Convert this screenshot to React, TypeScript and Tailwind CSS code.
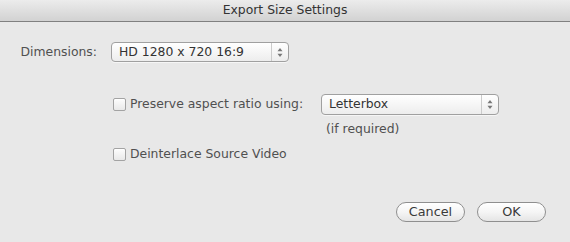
import React from "react";

const font = { fontFamily: '"Lucida Grande", "DejaVu Sans", sans-serif' };

function Arrows() {
  return (
    <svg width="6" height="11" viewBox="0 0 6 11" className="block">
      <path d="M3 1 L5.5 4.2 L0.5 4.2 Z" fill="#777" />
      <path d="M3 10 L5.5 6.8 L0.5 6.8 Z" fill="#777" />
    </svg>
  );
}

function PopUp({ label, width, height }: { label: string; width: string; height: string }) {
  return (
    <div
      className={`${width} ${height} flex items-stretch rounded-[4px] border border-[#a0a0a0] bg-gradient-to-b from-white to-[#ededed] shadow-[0_1px_0_rgba(255,255,255,0.6)]`}
    >
      <div className="flex-1 flex items-center pl-[7px] text-[12.4px] text-[#333]">{label}</div>
      <div className="w-[17px] flex items-center justify-center border-l border-[#cbcbcb]">
        <Arrows />
      </div>
    </div>
  );
}

function Checkbox() {
  return (
    <div className="w-[13px] h-[13px] rounded-[2px] border border-[#a3a3a3] bg-gradient-to-b from-[#fdfdfd] to-[#e9e9e9] shadow-[inset_0_1px_0_#fff]" />
  );
}

function Button({ label }: { label: string }) {
  return (
    <button
      type="button"
      className="w-[69px] h-[20px] rounded-full border border-[#8f8f8f] bg-gradient-to-b from-white via-[#f5f5f5] to-[#e5e5e5] text-[12.8px] text-[#3a3a3a] leading-none"
    >
      {label}
    </button>
  );
}

export default function App() {
  return (
    <div className="w-[570px] h-[242px] bg-[#e8e8e8] flex flex-col overflow-hidden" style={font}>
      {/* title bar */}
      <div className="h-[22px] shrink-0 flex items-center justify-center bg-gradient-to-b from-[#ececec] to-[#d2d2d2] border-b border-[#808080] text-[12.4px] text-[#333]">
        Export Size Settings
      </div>

      {/* dimensions */}
      <div className="mt-[20px] flex items-center">
        <div className="w-[97px] text-right text-[12.4px] text-[#505050]">Dimensions:</div>
        <div className="ml-[14px]">
          <PopUp label="HD 1280 x 720 16:9" width="w-[178px]" height="h-[20px]" />
        </div>
      </div>

      {/* preserve aspect */}
      <div className="mt-[32px] flex items-center pl-[113px]">
        <Checkbox />
        <div className="ml-[4px] w-[191px] text-[12.4px] text-[#505050]">Preserve aspect ratio using:</div>
        <PopUp label="Letterbox" width="w-[178px]" height="h-[21px]" />
      </div>
      <div className="mt-[6px] pl-[326px] text-[12.4px] leading-[16px] text-[#505050]">(if required)</div>

      {/* deinterlace */}
      <div className="mt-[9px] flex items-center pl-[113px]">
        <Checkbox />
        <div className="ml-[4px] text-[12.4px] leading-[16px] text-[#505050]">Deinterlace Source Video</div>
      </div>

      {/* buttons */}
      <div className="mt-[40px] flex justify-end gap-[12px] pr-[24px]">
        <Button label="Cancel" />
        <Button label="OK" />
      </div>
    </div>
  );
}
